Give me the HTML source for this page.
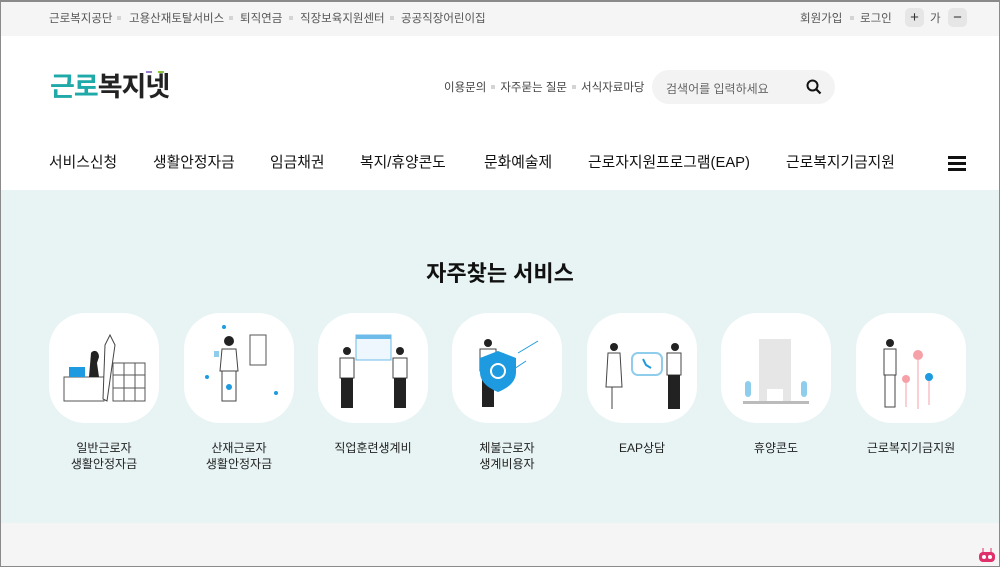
<!DOCTYPE html>
<html><head><meta charset="utf-8"><style>
*{margin:0;padding:0;box-sizing:border-box}
body{width:1000px;height:567px;overflow:hidden;font-family:"Liberation Sans","Noto Sans CJK KR",sans-serif;background:#fff;position:relative;color:#222}
.frame{position:absolute;inset:0;border:1px solid #8a8a8a;border-top-width:2px;pointer-events:none;z-index:9}
.top{position:absolute;left:0;top:0;width:1000px;height:36px;background:#f5f5f5;font-size:11.5px;color:#555}
.top span{position:absolute;top:10px;white-space:nowrap}
.sq{position:absolute;top:16px;width:4px;height:4px;background:#d4d4d4}
.btn{position:absolute;top:8px;width:19px;height:19px;border-radius:5px;background:#e6e6e6;text-align:center;line-height:19px;font-size:15px;color:#333}
.abs{position:absolute;white-space:nowrap}
.nav{position:absolute;top:151px;font-size:14.8px;color:#111;white-space:nowrap}
.teal{position:absolute;left:0;top:190px;width:1000px;height:333px;background:#e8f4f4}
.bot{position:absolute;left:0;top:523px;width:1000px;height:44px;background:#f6f5f6}
.card{position:absolute;top:313px;width:110px;height:110px;border-radius:36px;background:#fff}
.card svg{position:absolute;left:0;top:0}
.lbl{position:absolute;top:440px;width:140px;text-align:center;font-size:12px;line-height:16px;color:#222}
</style></head><body>
<div class="top">
<span style="left:49px">근로복지공단</span><div class="sq" style="left:117px"></div>
<span style="left:129px">고용산재토탈서비스</span><div class="sq" style="left:229px"></div>
<span style="left:240px">퇴직연금</span><div class="sq" style="left:289px"></div>
<span style="left:300px">직장보육지원센터</span><div class="sq" style="left:390px"></div>
<span style="left:401px">공공직장어린이집</span>
<span style="left:800px">회원가입</span><div class="sq" style="left:850px"></div>
<span style="left:860px">로그인</span>
<div class="btn" style="left:905px">+</div><span style="left:930px">가</span><div class="btn" style="left:948px">−</div>
</div>

<div class="abs" style="left:50px;top:70px;font-size:27px;font-weight:bold;letter-spacing:-1px;line-height:34px"><span style="color:#1fa9a8">근로</span><span style="color:#222">복지넷</span></div>
<div class="abs" style="left:146px;top:71px;width:6px;height:2px;background:#9b7fd4"></div>
<div class="abs" style="left:158px;top:71px;width:6px;height:2px;background:#8cc63f"></div>

<div class="abs" style="left:444px;top:79px;font-size:11.5px;color:#444">이용문의<span style="display:inline-block;width:4px;height:4px;background:#d4d4d4;margin:0 5px 2px"></span>자주묻는 질문<span style="display:inline-block;width:4px;height:4px;background:#d4d4d4;margin:0 5px 2px"></span>서식자료마당</div>
<div class="abs" style="left:652px;top:70px;width:183px;height:34px;border-radius:17px;background:#f3f3f3"></div>
<div class="abs" style="left:666px;top:80px;font-size:12px;color:#666">검색어를 입력하세요</div>
<svg class="abs" style="left:806px;top:79px" width="16" height="16" viewBox="0 0 16 16"><circle cx="6.5" cy="6.5" r="5" fill="none" stroke="#111" stroke-width="2"/><line x1="10" y1="10" x2="14.5" y2="14.5" stroke="#111" stroke-width="2.2"/></svg>

<div class="nav" style="left:49px">서비스신청</div>
<div class="nav" style="left:153px">생활안정자금</div>
<div class="nav" style="left:270px">임금채권</div>
<div class="nav" style="left:360px">복지/휴양콘도</div>
<div class="nav" style="left:484px">문화예술제</div>
<div class="nav" style="left:588px">근로자지원프로그램(EAP)</div>
<div class="nav" style="left:786px">근로복지기금지원</div>
<div class="abs" style="left:948px;top:156px;width:18px;height:3px;background:#111;box-shadow:0 6px 0 #111,0 12px 0 #111"></div>

<div class="teal"></div>
<div class="abs" style="left:0;width:1000px;top:256px;text-align:center;font-size:22px;font-weight:bold;color:#111">자주찾는 서비스</div>

<div class="card" style="left:49px"><svg width="110" height="110">
<rect x="15" y="64" width="40" height="24" fill="#fff" stroke="#555"/><rect x="20" y="54" width="16" height="10" fill="#1e9be0"/>
<path d="M42 40c3-4 8-2 8 4l-2 6 2 14h-10z" fill="#222"/><path d="M56 32l5 -10 5 10 -8 56-4-2z" fill="#fff" stroke="#444"/>
<rect x="64" y="50" width="32" height="38" fill="#fff" stroke="#555"/><line x1="64" y1="62" x2="96" y2="62" stroke="#555"/><line x1="64" y1="75" x2="96" y2="75" stroke="#555"/><line x1="75" y1="50" x2="75" y2="88" stroke="#555"/><line x1="86" y1="50" x2="86" y2="88" stroke="#555"/>
</svg></div>
<div class="card" style="left:184px"><svg width="110" height="110">
<path d="M66 22h16v30h-16z" fill="#fff" stroke="#555"/><circle cx="45" cy="28" r="5" fill="#222"/><path d="M38 36h14l2 22h-18z" fill="#fff" stroke="#444"/><path d="M38 58h14v30h-14z" fill="#fff" stroke="#444"/>
<circle cx="40" cy="14" r="2" fill="#1e9be0"/><circle cx="23" cy="64" r="2" fill="#1e9be0"/><circle cx="45" cy="74" r="3" fill="#1e9be0"/><circle cx="92" cy="80" r="2" fill="#1e9be0"/><rect x="30" y="38" width="5" height="6" fill="#8fcdec"/>
</svg></div>
<div class="card" style="left:318px"><svg width="110" height="110">
<rect x="38" y="22" width="35" height="25" fill="#eef7fd" stroke="#6cbbe8"/><rect x="38" y="22" width="35" height="4" fill="#6cbbe8"/>
<circle cx="29" cy="38" r="4" fill="#222"/><path d="M22 45h14v20h-14z" fill="#fff" stroke="#444"/><path d="M23 65h12v30h-12z" fill="#222"/>
<circle cx="82" cy="38" r="4" fill="#222"/><path d="M75 45h14v20h-14z" fill="#fff" stroke="#444"/><path d="M76 65h12v30h-12z" fill="#222"/>
</svg></div>
<div class="card" style="left:452px"><svg width="110" height="110">
<circle cx="36" cy="30" r="4" fill="#222"/><path d="M28 36h16v22h-16z" fill="#fff" stroke="#444"/><path d="M30 58h12v36h-12z" fill="#222"/>
<path d="M46 38l18 7v14c0 10-8 16-18 20-10-4-18-10-18-20v-14z" fill="#1e9be0"/><circle cx="46" cy="58" r="7" fill="none" stroke="#fff" stroke-width="2"/>
<line x1="86" y1="28" x2="66" y2="40" stroke="#1e9be0"/><line x1="74" y1="48" x2="62" y2="56" stroke="#1e9be0"/>
</svg></div>
<div class="card" style="left:587px"><svg width="110" height="110">
<circle cx="27" cy="34" r="4" fill="#222"/><path d="M21 40h12l2 34h-16z" fill="#fff" stroke="#444"/><line x1="25" y1="74" x2="25" y2="96" stroke="#444"/>
<rect x="45" y="40" width="30" height="22" rx="6" fill="#fff" stroke="#8fcdec" stroke-width="2"/><path d="M56 46l3 6 5 3" stroke="#1e9be0" stroke-width="2" fill="none"/>
<circle cx="88" cy="34" r="4" fill="#222"/><path d="M80 40h14v22h-14z" fill="#fff" stroke="#444"/><path d="M81 62h12v34h-12z" fill="#222"/>
</svg></div>
<div class="card" style="left:721px"><svg width="110" height="110">
<rect x="38" y="26" width="32" height="62" fill="#e6e6e6"/><rect x="46" y="76" width="16" height="12" fill="#fff"/>
<rect x="24" y="68" width="6" height="16" rx="3" fill="#8fcdec"/><rect x="80" y="68" width="6" height="16" rx="3" fill="#8fcdec"/>
<rect x="22" y="88" width="66" height="3" fill="#bbb"/>
</svg></div>
<div class="card" style="left:856px"><svg width="110" height="110">
<circle cx="34" cy="30" r="4" fill="#222"/><path d="M28 36h12v26h-12z" fill="#fff" stroke="#444"/><path d="M29 62h10v32h-10z" fill="#fff" stroke="#444"/>
<circle cx="62" cy="42" r="5" fill="#f6a0a8"/><line x1="62" y1="47" x2="62" y2="96" stroke="#f6a0a8"/>
<circle cx="50" cy="66" r="4" fill="#f6a0a8"/><line x1="50" y1="70" x2="50" y2="94" stroke="#f6a0a8"/>
<circle cx="73" cy="64" r="4" fill="#1e9be0"/><line x1="73" y1="68" x2="73" y2="92" stroke="#f6a0a8"/>
</svg></div>

<div class="lbl" style="left:34px">일반근로자<br>생활안정자금</div>
<div class="lbl" style="left:169px">산재근로자<br>생활안정자금</div>
<div class="lbl" style="left:303px">직업훈련생계비</div>
<div class="lbl" style="left:437px">체불근로자<br>생계비용자</div>
<div class="lbl" style="left:572px">EAP상담</div>
<div class="lbl" style="left:706px">휴양콘도</div>
<div class="lbl" style="left:841px">근로복지기금지원</div>

<div class="bot"></div>
<svg class="abs" style="left:977px;top:548px" width="20" height="16"><rect x="2" y="4" width="16" height="10" rx="4" fill="#e0306a"/><circle cx="7" cy="9" r="2" fill="#fff"/><circle cx="13" cy="9" r="2" fill="#fff"/><line x1="6" y1="0" x2="6" y2="4" stroke="#e0306a"/><line x1="14" y1="0" x2="14" y2="4" stroke="#e0306a"/></svg>
<div class="frame"></div>
</body></html>
